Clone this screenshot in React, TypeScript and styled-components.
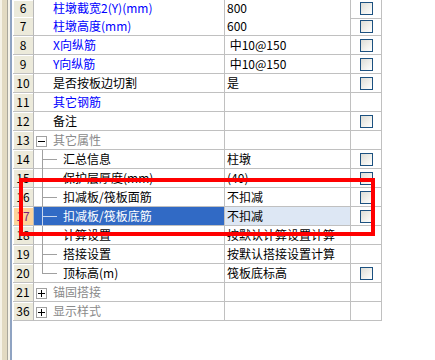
import React from 'react';
import styled, { createGlobalStyle } from 'styled-components';

const GlobalStyle = createGlobalStyle`
  html, body {
    margin: 0;
    padding: 0;
    background: #ffffff;
  }
  body {
    font-family: "Noto Sans CJK SC", "DejaVu Sans", sans-serif;
    font-size: 12px;
  }
`;

const Page = styled.div`
  position: relative;
  width: 435px;
  height: 360px;
  overflow: hidden;
  display: flex;
  background: #ffffff;
`;

/* edge of the docked panel on the left */
const SideStrip = styled.div`
  width: 13px;
  flex: none;
  display: flex;
  background: #ffffff;
`;

const StripBand = styled.div<{ $w: number; $c: string }>`
  width: ${p => p.$w}px;
  background: ${p => p.$c};
`;

const Grid = styled.div`
  display: flex;
  flex-direction: column;
`;

// first row is scrolled 2px out of view
const Row = styled.div<{ $clipped?: boolean }>`
  display: grid;
  grid-template-columns: 21px 191px 126px 31px;
  height: ${p => (p.$clipped ? 17 : 19)}px;
  & > div {
    padding-bottom: ${p => (p.$clipped ? 2 : 0)}px;
  }
`;

const Cell = styled.div`
  position: relative;
  box-sizing: border-box;
  height: 100%;
  border-right: 1px solid #c0c0c0;
  border-bottom: 1px solid #c0c0c0;
  display: flex;
  align-items: center;
  white-space: pre;
  line-height: 16px;
`;

const HeadCell = styled(Cell)<{ $active?: boolean }>`
  justify-content: center;
  background: ${p => (p.$active ? '#fcd49c' : '#eceadb')};
  color: ${p => (p.$active ? '#7a1f7a' : '#000000')};
  border-right-color: #b8b8b8;
  box-shadow: inset 1px 1px 0 #ffffff;
`;

type NameKind = 'blue' | 'black' | 'group' | 'child';

const NameCell = styled(Cell)<{ $kind: NameKind; $selected?: boolean }>`
  padding-left: ${p => (p.$kind === 'child' ? 29 : 19)}px;
  color: ${p =>
    p.$selected ? '#ffffff' : p.$kind === 'blue' ? '#0000ff' : p.$kind === 'group' ? '#8a8a8a' : '#000000'};
  background: ${p => (p.$selected ? '#316ac5' : '#ffffff')};
`;

const ValueCell = styled(Cell)<{ $selected?: boolean }>`
  padding-left: 2px;
  color: #000000;
  background: ${p => (p.$selected ? '#dde7f4' : '#ffffff')};
`;

const CheckCell = styled(Cell)`
  justify-content: center;
`;

const CheckBox = styled.span`
  width: 13px;
  height: 13px;
  box-sizing: border-box;
  border: 1px solid #1c5180;
  background: linear-gradient(135deg, #dcdcd6 0%, #f2f2ee 60%, #ffffff 100%);
`;

const ToggleBox = styled.span`
  position: absolute;
  left: 2px;
  top: 5px;
  width: 11px;
  height: 11px;
  box-sizing: border-box;
  border: 1px solid #a0a0a0;
  background: #ffffff;
  &::before {
    content: '';
    position: absolute;
    left: 1px;
    top: 4px;
    width: 7px;
    height: 1px;
    background: #000000;
  }
`;

const PlusBox = styled(ToggleBox)`
  &::after {
    content: '';
    position: absolute;
    left: 4px;
    top: 1px;
    width: 1px;
    height: 7px;
    background: #000000;
  }
`;

const TreeLine = styled.span<{ $last?: boolean; $selected?: boolean }>`
  position: absolute;
  left: 8px;
  top: 0;
  width: 15px;
  height: 100%;
  pointer-events: none;
  &::before {
    content: '';
    position: absolute;
    left: 0;
    top: 0;
    width: 1px;
    height: ${p => (p.$last ? '9px' : '19px')};
    background: ${p => (p.$selected ? '#c8d6ee' : '#a0a0a0')};
  }
  &::after {
    content: '';
    position: absolute;
    left: 0;
    top: 9px;
    width: 15px;
    height: 1px;
    background: ${p => (p.$selected ? '#c8d6ee' : '#a0a0a0')};
  }
`;

const Highlight = styled.div`
  position: absolute;
  left: 19px;
  top: 178px;
  width: 356px;
  height: 58px;
  box-sizing: border-box;
  border: 4px solid #ff0000;
  pointer-events: none;
`;

type Item = {
  no: string;
  name: string;
  kind: NameKind;
  value?: string;
  check?: boolean;
  toggle?: 'minus' | 'plus';
  last?: boolean;
  selected?: boolean;
};

const items: Item[] = [
  { no: '6', name: '柱墩截宽2(Y)(mm)', kind: 'blue', value: '800', check: true },
  { no: '7', name: '柱墩高度(mm)', kind: 'blue', value: '600', check: true },
  { no: '8', name: 'X向纵筋', kind: 'blue', value: ' 中10@150', check: true },
  { no: '9', name: 'Y向纵筋', kind: 'blue', value: ' 中10@150', check: true },
  { no: '10', name: '是否按板边切割', kind: 'black', value: '是', check: true },
  { no: '11', name: '其它钢筋', kind: 'blue' },
  { no: '12', name: '备注', kind: 'black', check: true },
  { no: '13', name: '其它属性', kind: 'group', toggle: 'minus' },
  { no: '14', name: '汇总信息', kind: 'child', value: '柱墩', check: true },
  { no: '15', name: '保护层厚度(mm)', kind: 'child', value: '(40)', check: true },
  { no: '16', name: '扣减板/筏板面筋', kind: 'child', value: '不扣减', check: true },
  { no: '17', name: '扣减板/筏板底筋', kind: 'child', value: '不扣减', check: true, selected: true },
  { no: '18', name: '计算设置', kind: 'child', value: '按默认计算设置计算' },
  { no: '19', name: '搭接设置', kind: 'child', value: '按默认搭接设置计算' },
  { no: '20', name: '顶标高(m)', kind: 'child', value: '筏板底标高', check: true, last: true },
  { no: '21', name: '锚固搭接', kind: 'group', toggle: 'plus' },
  { no: '36', name: '显示样式', kind: 'group', toggle: 'plus' },
];

const App: React.FC = () => (
  <>
    <GlobalStyle />
    <Page>
      <SideStrip>
        <StripBand $w={2} $c="#f6f3e8" />
        <StripBand $w={5} $c="#e2dac2" />
        <StripBand $w={1} $c="#a9a79c" />
        <StripBand $w={2} $c="#f6f3e8" />
        <StripBand $w={2} $c="#8fa3c2" />
        <StripBand $w={1} $c="#ffffff" />
      </SideStrip>
      <Grid>
        {items.map((it, i) => (
          <Row key={it.no} $clipped={i === 0}>
            <HeadCell $active={it.selected}>{it.no}</HeadCell>
            <NameCell $kind={it.kind} $selected={it.selected}>
              {it.toggle === 'minus' && <ToggleBox />}
              {it.toggle === 'plus' && <PlusBox />}
              {it.kind === 'child' && <TreeLine $last={it.last} $selected={it.selected} />}
              {it.name}
            </NameCell>
            <ValueCell $selected={it.selected}>{it.value}</ValueCell>
            <CheckCell>{it.check && <CheckBox />}</CheckCell>
          </Row>
        ))}
      </Grid>
      <Highlight />
    </Page>
  </>
);

export default App;
